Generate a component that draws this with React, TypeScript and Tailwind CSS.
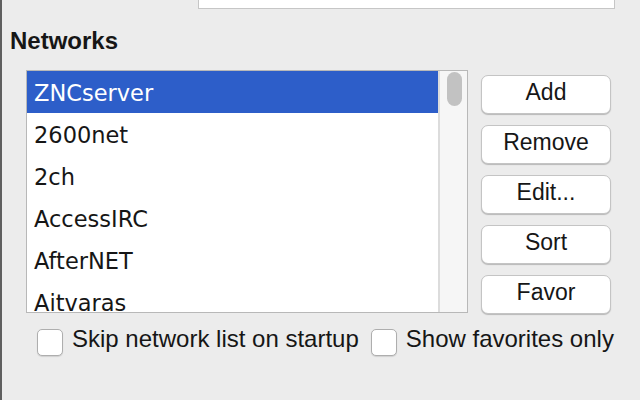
const networks = ["ZNCserver", "2600net", "2ch", "AccessIRC", "AfterNET", "Aitvaras"];

const buttons = ["Add", "Remove", "Edit...", "Sort", "Favor"];

export default function App() {
  return (
    <div className="w-[640px] h-[400px] overflow-hidden bg-[#ececec] border-l-2 border-[#5f5f5f] font-['Liberation_Sans',Arial,sans-serif] text-[#161616]">
      {/* bottom of the field above */}
      <div className="ml-[196px] w-[417px] h-[9px] bg-white border border-t-0 border-[#c6c6c6]" />

      <h2 className="mt-[18px] ml-[8px] h-[28px] leading-[28px] text-[24px] font-bold">Networks</h2>

      <div className="mt-[15px] flex">
        {/* network list */}
        <div className="ml-[24px] w-[442px] h-[243px] flex border border-[#b8b8b8]">
          <div className="flex-1 bg-white overflow-hidden border-r-2 border-[#dcdcdc] font-['DejaVu_Sans',sans-serif] text-[22.5px]">
            {networks.map((name, i) => (
              <div
                key={name}
                className={
                  i === 0
                    ? "h-[42px] pt-[3px] leading-[39px] pl-[7px] bg-[#2d5ec9] text-white"
                    : "h-[42px] pt-[3px] leading-[39px] pl-[7px] text-[#161616]"
                }
              >
                {name}
              </div>
            ))}
          </div>
          <div className="w-[27px] bg-[#f6f6f6] pt-[1px]">
            <div className="ml-[7px] w-[15px] h-[34px] rounded-full bg-[#c2c2c2]" />
          </div>
        </div>

        {/* buttons */}
        <div className="ml-[13px] mt-[5px] w-[130px] flex flex-col gap-[11px]">
          {buttons.map((label) => (
            <div
              key={label}
              className="h-[39px] flex items-center justify-center pb-[5px] bg-white rounded-[7px] border border-[#c4c4c4] shadow-[0_1px_1px_rgba(0,0,0,0.22)] text-[23px]"
            >
              {label}
            </div>
          ))}
        </div>
      </div>

      {/* options */}
      <div className="mt-[11px] ml-[35px] flex items-start text-[24px] leading-[28px]">
        <Checkbox />
        <span className="ml-[9px] whitespace-nowrap">Skip network list on startup</span>
        <Checkbox className="ml-[12px]" />
        <span className="ml-[9px] whitespace-nowrap">Show favorites only</span>
      </div>
    </div>
  );
}

function Checkbox({ className = "" }: { className?: string }) {
  return (
    <div
      className={`mt-[4px] w-[26px] h-[27px] shrink-0 bg-white rounded-[5px] border border-[#aeaeae] shadow-[0_1px_1px_rgba(0,0,0,0.12)] ${className}`}
    />
  );
}
